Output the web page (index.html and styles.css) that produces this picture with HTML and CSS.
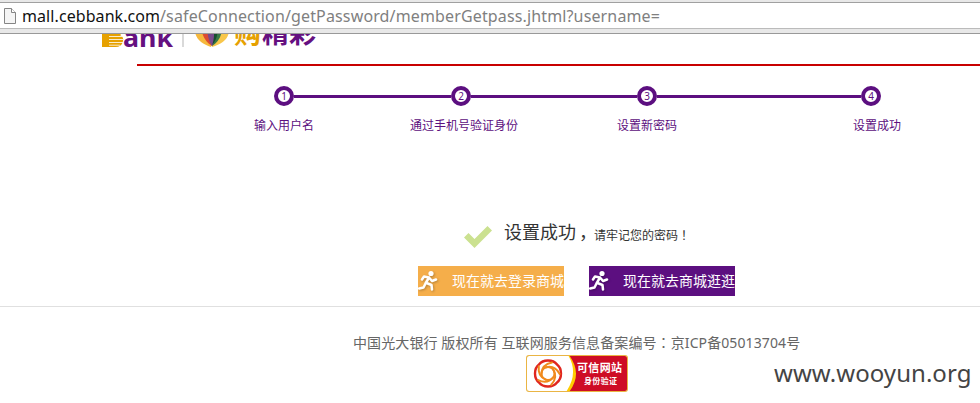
FILE: index.html
```html
<!DOCTYPE html>
<html lang="zh-CN">
<head>
<meta charset="utf-8">
<title>设置成功</title>
<link rel="stylesheet" href="styles.css">
</head>
<body>
<div class="browser-bar">
  <div class="address">
    <svg class="page-icon" width="12" height="16" viewBox="0 0 12 16"><path d="M.5.5h7l4 4v11H.5z" fill="#f5f5f5" stroke="#858585"/><path d="M7.5.5v4h4" fill="#fff" stroke="#858585"/></svg>
    <span class="host">mall.cebbank.com</span><span class="path">/safeConnection/getPassword/memberGetpass.jhtml?username=</span>
  </div>
</div>
<header class="header">
  <svg class="logo" width="220" height="32" viewBox="0 0 220 32">
    <path d="M2 8h13q7 1 7 7 0 3-2 4 4 2 3 6-1 6-8 6H2z" fill="#e6a100"/>
    <path d="M9 20.500h13M9 23.500h14M9 26.500h14M9 29.200h11" stroke="#fff" stroke-width=".8"/>
    <text class="logo-bank" x="23" y="30.500" textLength="50" lengthAdjust="spacingAndGlyphs">ank</text>
    <path d="M83 8v23" stroke="#ccc" stroke-width="1.500"/>
    <path d="M95 14c0 9 7 14 16 17l3-17z" fill="#f6b83c"/>
    <path d="M129 14c0 9-7 14-17 17l-2-17z" fill="#f8c64a"/>
    <path d="M101 8c0 10 4 18 11 22l2-22z" fill="#dc4b32"/>
    <path d="M122 8c1 10-3 18-10 22l-2-22z" fill="#397946"/>
    <path d="M107 8c0 11 2 18 5 22 3-5 4-11 4-22z" fill="#7a4a8c"/>
    <path d="M113 8c2 8 1 17-1 21 5-5 6-12 6-21z" fill="#174e30"/>
    <text class="logo-cn logo-cn-gold" x="134" y="27" textLength="27" lengthAdjust="spacingAndGlyphs">购</text>
    <text class="logo-cn" x="162" y="27" textLength="54" lengthAdjust="spacingAndGlyphs">精彩</text>
  </svg>
</header>
<main>
  <div class="rule"></div>
  <div class="track">
    <span class="dot">1</span><i class="line line-a"></i><span class="dot">2</span><i class="line line-b"></i><span class="dot">3</span><i class="line line-c"></i><span class="dot">4</span>
  </div>
  <div class="labels">
    <span class="label label-1">输入用户名</span><span class="label label-2">通过手机号验证身份</span><span class="label label-3">设置新密码</span><span class="label label-4">设置成功</span>
  </div>
  <div class="result">
    <svg class="check" width="28" height="22" viewBox="0 0 28 22"><path d="M0 11.500 4.500 7l6 6L23.500 0 28 4.500 10.500 22z" fill="#cbe190"/></svg>
    <strong class="result-title">设置成功</strong><span class="comma">，</span><span class="result-note">请牢记您的密码<span class="mark" lang="zh-TW">！</span></span>
  </div>
  <div class="actions">
    <a class="button button-login"><svg class="runner" width="20" height="22" viewBox="0 0 20 22"><circle cx="13" cy="3.500" r="2.600" fill="#fff"/><path d="M4 9.500l2-3 5 1-3.500 6L5.500 17.500 1.200 18.500M11 7.500l3 3.500 4-1.500M8.500 13l5 2 .5 4.500" fill="none" stroke="#fff" stroke-width="2.500" stroke-linecap="round" stroke-linejoin="round"/></svg><span class="button-text">现在就去登录商城</span></a>
    <a class="button button-mall"><svg class="runner" width="20" height="22" viewBox="0 0 20 22"><circle cx="13" cy="3.500" r="2.600" fill="#fff"/><path d="M4 9.500l2-3 5 1-3.500 6L5.500 17.500 1.200 18.500M11 7.500l3 3.500 4-1.500M8.500 13l5 2 .5 4.500" fill="none" stroke="#fff" stroke-width="2.500" stroke-linecap="round" stroke-linejoin="round"/></svg><span class="button-text">现在就去商城逛逛</span></a>
  </div>
</main>
<footer class="footer">
  <p class="copyright">中国光大银行 版权所有 互联网服务信息备案编号<span class="mark" lang="zh-TW">：</span>京ICP备05013704号</p>
  <svg class="badge" width="102" height="37" viewBox="0 0 102 37">
    <defs><clipPath id="badge-shape"><rect x="1" y="1" width="100" height="35" rx="2.500"/></clipPath></defs>
    <rect width="102" height="37" rx="3" fill="#eab544"/>
    <g clip-path="url(#badge-shape)">
      <rect width="102" height="37" fill="#fff"/>
      <path d="M42 0q11 18-2 37h62V0z" fill="#fc0"/>
      <path d="M43 0q14 19 0 37h59V0z" fill="#ce0c25"/>
    </g>
    <g fill="none" stroke-linecap="round" transform="translate(22 18.500)">
      <path d="M-9-9Q-6-13 0-13Q6-13 9-9Q13-6 13 0Q13 6 9 9Q6 13 0 13Q-6 13-9 9Q-13 6-13 0Q-13-6-9-9z" stroke="#e0261f" stroke-width="2.400"/>
      <g stroke="#f08a1d" stroke-width="2"><circle r="6.500"/><path d="M-6.500 0Q-6-9 4-11"/><path d="M-6.500 0Q-6-9 4-11" transform="rotate(72)"/><path d="M-6.500 0Q-6-9 4-11" transform="rotate(144)"/><path d="M-6.500 0Q-6-9 4-11" transform="rotate(216)"/><path d="M-6.500 0Q-6-9 4-11" transform="rotate(288)"/></g>
    </g>
    <text class="badge-title" x="51" y="17" textLength="45">可信网站</text>
    <text class="badge-sub" x="58" y="28.500" textLength="33">身份验证</text>
  </svg>
  <div class="watermark">www.wooyun.org</div>
</footer>
</body>
</html>
```
FILE: styles.css
```css
* { box-sizing: border-box; }
body {
  margin: 0;
  height: 403px;
  overflow: hidden;
  background: #fff;
  color: #333;
  font-family: "Noto Sans", "Noto Sans CJK SC", sans-serif;
}
.browser-bar {
  height: 34px;
  padding-top: 2px;
  background: #e8e8e8;
  border-bottom: 1px solid #999;
}
.address {
  display: flex;
  align-items: center;
  height: 27px;
  padding-left: 4px;
  border-top: 1px solid #a0a0a0;
  border-bottom: 1px solid #bbb;
  background: #fff;
  font-size: 16px;
  line-height: 24px;
  white-space: nowrap;
}
.page-icon { margin-right: 6px; }
.host { width: 138px; color: #111; letter-spacing: .08px; }
.path { color: #808080; letter-spacing: .14px; }
.header {
  display: flex;
  align-items: flex-end;
  height: 14px;
  padding-left: 100px;
  overflow: hidden;
}
.logo { flex: none; }
.logo-bank { font: bold 25px "Noto Sans", sans-serif; fill: #651080; }
.logo-cn { font: bold 26px "Noto Sans CJK SC", sans-serif; fill: #651080; }
.logo-cn-gold { fill: #e6a100; }
.rule { height: 2px; margin: 16px 0 0 137px; background: #c80000; }
.track { display: flex; align-items: center; height: 20px; margin: 20px 0 0 274px; }
.dot {
  width: 20px;
  height: 20px;
  border: 4px solid #5c0f80;
  border-radius: 50%;
  color: #5c0f80;
  font-size: 10px;
  line-height: 12px;
  text-align: center;
}
.line { height: 3px; background: #5c0f80; }
.line-a { width: 157px; }
.line-b { width: 166px; }
.line-c { width: 204px; }
.labels {
  display: flex;
  height: 18px;
  margin: 11px 0 0 254px;
  color: #5c0f80;
  font-size: 12px;
  line-height: 18px;
  white-space: nowrap;
}
.label-1 { width: 156px; }
.label-2 { width: 207px; }
.label-3 { width: 236px; }
.result {
  display: flex;
  align-items: center;
  height: 28px;
  margin: 83px 0 0 464px;
  white-space: nowrap;
}
.check { margin: 10px 12px 0 0; }
.result-title { font-size: 18px; font-weight: 400; line-height: 28px; }
.comma { width: 18px; padding-left: 3px; font-size: 18px; line-height: 28px; }
.result-note { padding-top: 6px; font-size: 12px; line-height: 18px; }
.mark { font-family: "Noto Sans CJK TC", sans-serif; }
.actions { display: flex; gap: 25px; margin: 20px 0 0 418px; }
.button {
  display: flex;
  align-items: center;
  width: 146px;
  height: 30px;
  overflow: hidden;
  color: #fff;
  font-size: 14px;
  white-space: nowrap;
}
.button-text { margin-top: -2px; }
.button-login { background: #f5ae4a; }
.button-mall { background: #5c0f80; }
.runner { flex: none; margin-right: 14px; filter: drop-shadow(1px 1px 1px rgba(0, 0, 0, .25)); }
.footer {
  display: grid;
  grid-template-columns: 526px 102px 1fr;
  grid-template-rows: 20px 37px;
  row-gap: 3px;
  margin-top: 10px;
  padding-top: 25px;
  border-top: 1px solid #e0e0e0;
}
.copyright {
  grid-column: 1 / -1;
  margin: 0 0 0 353px;
  color: #666;
  font-size: 14px;
  line-height: 20px;
  letter-spacing: .1px;
  white-space: nowrap;
}
.badge { grid-column: 2; }
.badge-title { font: bold 11px "Noto Sans CJK SC", sans-serif; fill: #fff; }
.badge-sub { font: bold 8px "Noto Sans CJK SC", sans-serif; fill: #fff; }
.watermark {
  margin: -1px 0 0 146px;
  color: #444;
  font-size: 24px;
  line-height: 37px;
  letter-spacing: .05px;
  white-space: nowrap;
}
```
